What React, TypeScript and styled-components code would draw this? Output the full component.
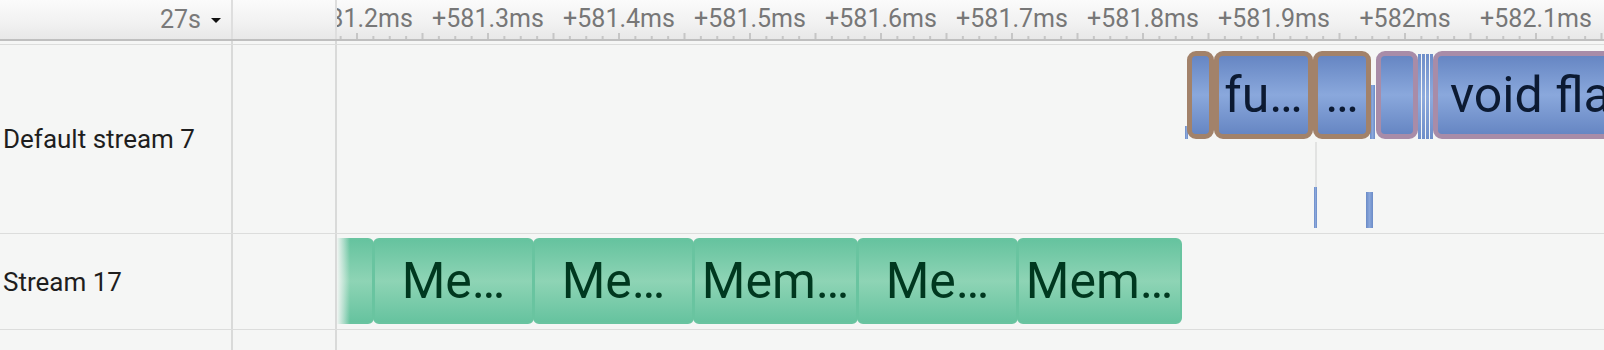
import React from "react";
import styled, { createGlobalStyle, css } from "styled-components";

const BG = "#f5f6f5";

const GlobalStyle = createGlobalStyle`
  html, body { margin: 0; padding: 0; background: ${BG}; overflow: hidden; }
  body { font-family: Roboto, "Liberation Sans", sans-serif; }
  * { box-sizing: border-box; }
`;

/* ---------- time axis ---------- */
const TRACK_X0 = 337; // page x where the timeline starts
const PX_PER_MS = 1310;
const REF_T = 581.3;
const REF_X = 488 - TRACK_X0;
const timeToX = (t: number) => REF_X + (t - REF_T) * PX_PER_MS;

const LABELS = [581.2, 581.3, 581.4, 581.5, 581.6, 581.7, 581.8, 581.9, 582.0, 582.1];
const fmt = (t: number) => {
  const s = Number(t.toFixed(1));
  return `+${Number.isInteger(s) ? s.toFixed(0) : s.toFixed(1)}ms`;
};

/* ---------- layout ---------- */
const Page = styled.div`
  width: 1604px;
  height: 350px;
  display: flex;
  flex-direction: column;
  background: ${BG};
  overflow: hidden;
`;

const Row = styled.div<{ $h: number; $border?: string }>`
  display: flex;
  flex: none;
  height: ${(p) => p.$h}px;
  border-bottom: ${(p) => p.$border ?? "1px solid #dcdddc"};
`;

const HeaderRow = styled(Row)`
  background: linear-gradient(180deg, #fbfbfb 0%, #f1f1f1 60%, #e8e8e8 100%);
`;

const NameCell = styled.div<{ $header?: boolean }>`
  width: 233px;
  flex: none;
  border-right: 2px solid ${(p) => (p.$header ? "#dedede" : "#d9dad9")};
  display: flex;
  align-items: center;
  justify-content: ${(p) => (p.$header ? "flex-end" : "flex-start")};
  padding: ${(p) => (p.$header ? "0 10px 0 0" : "0 0 0 3px")};
  font-size: ${(p) => (p.$header ? "25px" : "26px")};
  color: ${(p) => (p.$header ? "#7a7a7a" : "#1e1e1e")};
  white-space: nowrap;
`;

const ExtraCell = styled.div<{ $header?: boolean }>`
  width: 104px;
  flex: none;
  border-right: 2px solid ${(p) => (p.$header ? "#dedede" : "#d9dad9")};
`;

const TrackCell = styled.div`
  position: relative;
  flex: 1;
  overflow: hidden;
`;

const Caret = styled.span`
  width: 0;
  height: 0;
  margin-left: 10px;
  margin-top: 2px;
  border-left: 5px solid transparent;
  border-right: 5px solid transparent;
  border-top: 5px solid #111;
`;

const TickLabel = styled.span`
  position: absolute;
  top: 5px;
  transform: translateX(-50%);
  font-size: 25px;
  line-height: 28px;
  color: #777;
  white-space: nowrap;
`;

const Ruler = styled.svg`
  position: absolute;
  left: 0;
  bottom: 0;
`;

/* ---------- slices ---------- */
type Kind = "brown" | "purple" | "green";

const blueFill = "linear-gradient(180deg, #6686c3 0%, #8aa8dc 50%, #6686c3 100%)";
const greenFill = "linear-gradient(180deg, #66c39f 0%, #8ed4b5 50%, #66c39f 100%)";

const Slice = styled.div<{ $kind: Kind; $align?: "center" | "start" }>`
  position: absolute;
  display: flex;
  align-items: center;
  justify-content: ${(p) => (p.$align === "start" ? "flex-start" : "center")};
  padding-left: ${(p) => (p.$align === "start" ? "12px" : "0")};
  overflow: hidden;
  white-space: nowrap;
  font-size: 50px;
  line-height: 1;
  ${(p) =>
    p.$kind === "green"
      ? css`
          background: ${greenFill};
          border: 2px solid #69c4a0;
          border-radius: 6px;
          color: #00381f;
        `
      : css`
          background: ${blueFill};
          border: 5px solid ${p.$kind === "brown" ? "#a2826a" : "#a88ca8"};
          border-radius: 9px;
          color: #0c1a32;
        `}
`;

const Bar = styled.div<{ $tone: "blue" | "gray" }>`
  position: absolute;
  background: ${(p) =>
    p.$tone === "blue"
      ? "linear-gradient(90deg, #6a8bc7 0%, #8aa7db 50%, #6a8bc7 100%)"
      : "#e2e3e2"};
`;

const Stripes = styled.div`
  position: absolute;
  display: flex;
  gap: 1px;
`;

const Stripe = styled.div`
  flex: 1;
  background: linear-gradient(180deg, #6e8ec9 0%, #8eabdd 50%, #6e8ec9 100%);
`;

const EdgeFade = styled.div`
  position: absolute;
  left: 0;
  top: 0;
  bottom: 0;
  width: 13px;
  z-index: 2;
  background: linear-gradient(90deg, rgba(245, 246, 245, 0.97) 0%, rgba(245, 246, 245, 0.5) 50%, rgba(245, 246, 245, 0) 100%);
`;

/* ---------- data (page x converted to track-local x) ---------- */
const L = (pageX: number) => pageX - TRACK_X0;

type SliceData = { x0: number; x1: number; top: number; h: number; kind: Kind; label?: string; align?: "center" | "start" };
type BarData = { x0: number; x1: number; top: number; h: number; tone: "blue" | "gray" };

const stream7Slices: SliceData[] = [
  { x0: 1187, x1: 1214, top: 6, h: 88, kind: "brown" },
  { x0: 1214, x1: 1313, top: 6, h: 88, kind: "brown", label: "fu…" },
  { x0: 1313, x1: 1371, top: 6, h: 88, kind: "brown", label: "…" },
  { x0: 1376, x1: 1418, top: 6, h: 88, kind: "purple" },
  { x0: 1433, x1: 2100, top: 6, h: 88, kind: "purple", label: "void flash_fwd_kernel", align: "start" },
];

const stream7Bars: BarData[] = [
  { x0: 1185, x1: 1188, top: 81, h: 13, tone: "blue" },
  { x0: 1370, x1: 1375, top: 40, h: 54, tone: "blue" },
  { x0: 1315, x1: 1317, top: 97, h: 45, tone: "gray" },
  { x0: 1314, x1: 1317, top: 142, h: 41, tone: "blue" },
  { x0: 1366, x1: 1373, top: 147, h: 36, tone: "blue" },
];

const stream17Slices: SliceData[] = [
  { x0: 300, x1: 374, top: 4, h: 86, kind: "green" },
  { x0: 373, x1: 534, top: 4, h: 86, kind: "green", label: "Me…" },
  { x0: 533, x1: 694, top: 4, h: 86, kind: "green", label: "Me…" },
  { x0: 693, x1: 858, top: 4, h: 86, kind: "green", label: "Mem…" },
  { x0: 857, x1: 1018, top: 4, h: 86, kind: "green", label: "Me…" },
  { x0: 1017, x1: 1182, top: 4, h: 86, kind: "green", label: "Mem…" },
];

const renderSlices = (list: SliceData[]) =>
  list.map((s, i) => (
    <Slice
      key={i}
      $kind={s.kind}
      $align={s.align}
      style={{ left: L(s.x0), width: s.x1 - s.x0, top: s.top, height: s.h }}
    >
      {s.label}
    </Slice>
  ));

const renderBars = (list: BarData[]) =>
  list.map((b, i) => (
    <Bar key={i} $tone={b.tone} style={{ left: L(b.x0), width: b.x1 - b.x0, top: b.top, height: b.h }} />
  ));

/* ---------- ruler ---------- */
const TimeRuler: React.FC = () => {
  const width = 1604 - TRACK_X0;
  const minor = PX_PER_MS * 0.0125;
  const first = REF_X - Math.floor(REF_X / minor) * minor;
  const ticks: { x: number; major: boolean }[] = [];
  for (let i = 0, x = first; x < width; i++, x = first + i * minor) {
    const idx = Math.round((x - REF_X) / minor);
    ticks.push({ x, major: ((idx % 4) + 4) % 4 === 0 });
  }
  return (
    <Ruler width={width} height={8} viewBox={`0 0 ${width} 8`}>
      {ticks.map((t, i) => (
        <rect key={i} x={t.x - 1} y={t.major ? 2 : 5} width={2} height={t.major ? 6 : 3} fill="#c6c6c6" />
      ))}
    </Ruler>
  );
};

export default function App() {
  return (
    <>
      <GlobalStyle />
      <Page>
        <HeaderRow $h={41} $border="2px solid #bfbfbf">
          <NameCell $header>
            27s
            <Caret />
          </NameCell>
          <ExtraCell $header />
          <TrackCell>
            {LABELS.map((t) => (
              <TickLabel key={t} style={{ left: timeToX(t) }}>
                {fmt(t)}
              </TickLabel>
            ))}
            <TimeRuler />
          </TrackCell>
        </HeaderRow>
        <Row $h={4}>
          <NameCell />
          <ExtraCell />
          <TrackCell />
        </Row>
        <Row $h={189}>
          <NameCell>Default stream 7</NameCell>
          <ExtraCell />
          <TrackCell>
            {renderBars(stream7Bars)}
            {renderSlices(stream7Slices)}
            <Stripes style={{ left: L(1418), width: 15, top: 9, height: 85 }}>
              <Stripe />
              <Stripe />
              <Stripe />
              <Stripe />
            </Stripes>
          </TrackCell>
        </Row>
        <Row $h={96}>
          <NameCell>Stream 17</NameCell>
          <ExtraCell />
          <TrackCell>
            <EdgeFade />
            {renderSlices(stream17Slices)}
          </TrackCell>
        </Row>
        <Row $h={40} $border="none">
          <NameCell />
          <ExtraCell />
          <TrackCell />
        </Row>
      </Page>
    </>
  );
}
